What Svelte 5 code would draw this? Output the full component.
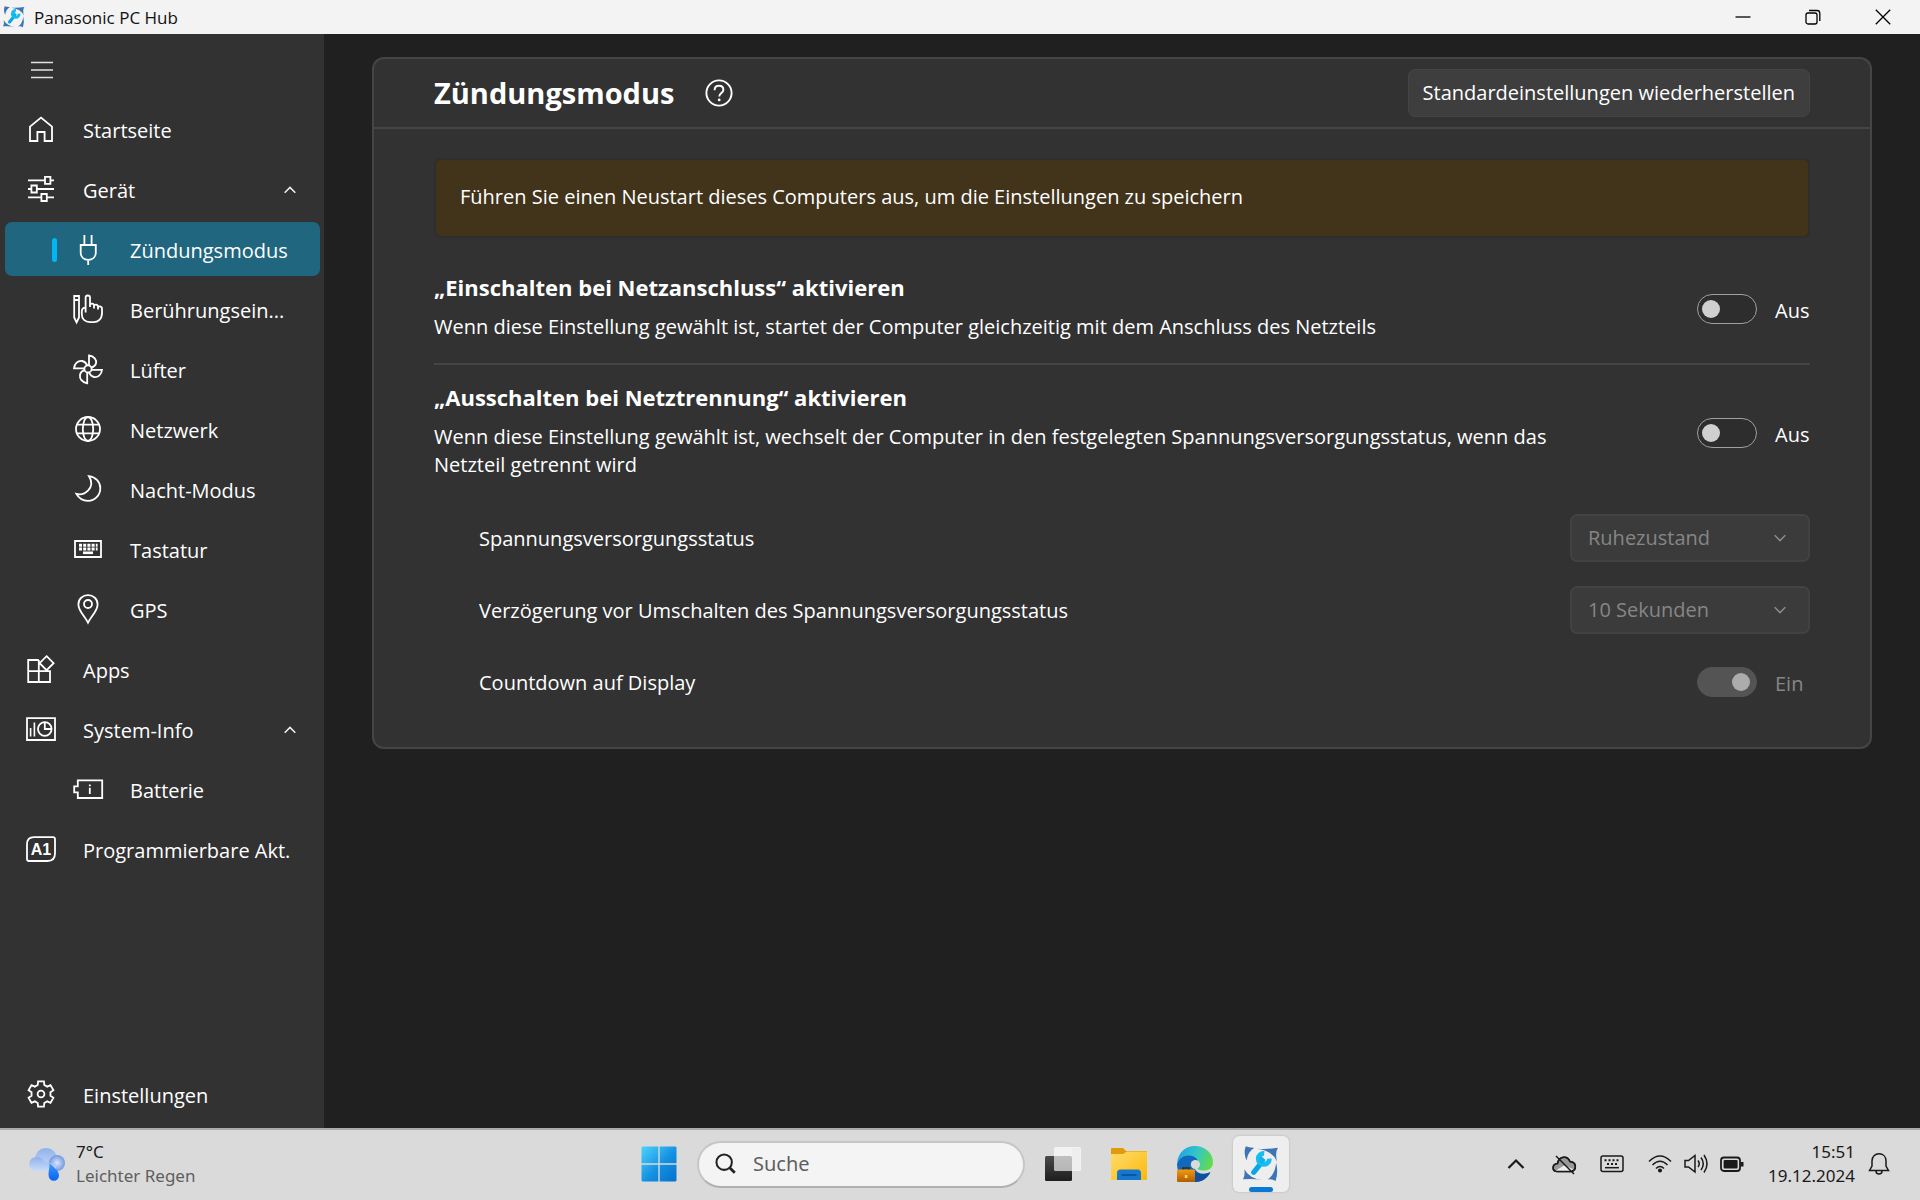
<script>
  const nav = [
    { id: 'home', label: 'Startseite' },
    { id: 'device', label: 'Gerät', open: true },
    { id: 'plug', label: 'Zündungsmodus', sub: true, active: true },
    { id: 'touch', label: 'Berührungsein...', sub: true },
    { id: 'fan', label: 'Lüfter', sub: true },
    { id: 'globe', label: 'Netzwerk', sub: true },
    { id: 'moon', label: 'Nacht-Modus', sub: true },
    { id: 'keyboard', label: 'Tastatur', sub: true },
    { id: 'pin', label: 'GPS', sub: true },
    { id: 'apps', label: 'Apps' },
    { id: 'system', label: 'System-Info', open: true },
    { id: 'battery', label: 'Batterie', sub: true },
    { id: 'a1', label: 'Programmierbare Akt.' }
  ];

  // Outline of a six-toothed cog around (15, 14)
  const cog = [-90, -30, 30, 90, 150, 210]
    .flatMap((a) => [[a - 20, 9.6], [a - 13, 13], [a + 13, 13], [a + 20, 9.6]])
    .map(([a, r]) => {
      const t = (a * Math.PI) / 180;
      return `${(15 + r * Math.cos(t)).toFixed(2)} ${(14 + r * Math.sin(t)).toFixed(2)}`;
    })
    .join(' L');

  let powerOn = $state(false);
  let powerOff = $state(false);
  let countdown = $state(true);
</script>

{#snippet icon(id)}
  <svg class="icon" viewBox="0 0 30 30" aria-hidden="true">
    {#if id === 'home'}
      <path d="M4 11.6 15 2.6 26 11.6V26H18.6V17H11.4V26H4Z" />
    {:else if id === 'device'}
      <path d="M2 5.3H19M24.5 5.3H28M2 14H5M11 14H28M2 22.4H15M21 22.4H28" />
      <path d="M19 1.8h5.4v7H19ZM5.4 10.5h5.4v7H5.4ZM15.4 19h5.4v7h-5.4Z" />
    {:else if id === 'plug'}
      <path d="M11.4 0V9.5M18.6 0V9.5M7.7 10H22.8V17.5C22.8 22 19.5 24.8 15.2 24.8S7.7 22 7.7 17.5ZM15.2 25V30" />
    {:else if id === 'touch'}
      <path d="M1.2 1H6V22.5L3.6 27.5 1.2 22.5ZM1.2 5H6" />
      <path d="M12.6 17.5V2.6C12.6-.2 17-.2 17 2.6V12M17 10.5C17 8 21 8 21 10.8V13.5M21 11.5C21 9 25 9 25 12V14.5M25 13C25 10.5 29 11 29 14V18C29 24 25 27.2 20.5 27.2H17C12 27.2 8.8 24 8.8 19V16.5C8.8 14 10 12.6 12.6 12.6" />
    {:else if id === 'fan'}
      <circle cx="15" cy="13.9" r="3.6" />
      <path d="M16 10.3V.5C21 1 24 5 23 8.5 22.5 10.5 21 11.8 18.3 12.8M18.6 14.8H29C28.6 20 24.5 22.8 21 22 18.7 21.5 17.2 20 16 17.3M14.2 17.5V28.3C9 27.5 6.4 23.5 7 20 7.4 17.6 9 16 11.8 15.2M11.4 13.4H1C1.4 8.5 5 5.5 9 6 11.5 6.4 13.2 8 14.2 10.4" />
    {:else if id === 'globe'}
      <circle cx="15" cy="14" r="12" />
      <ellipse cx="15" cy="14" rx="5.2" ry="12" />
      <path d="M4 9.6H26M4 18.4H26" />
    {:else if id === 'moon'}
      <path d="M16 1.2C22.8 2 27.3 7 27.3 13.2 27.3 20.3 21.8 25.8 15 25.8 9.8 25.8 5.8 23.4 3.4 18.9 7 19.8 12 18.8 15.2 15.4 18.8 11.5 19 6 16 1.2Z" />
    {:else if id === 'keyboard'}
      <path d="M2 6H28V22H2Z" />
      <path stroke-width="3" stroke-dasharray="3 1.2" d="M6 10.2H24.6M6 14H24.6" />
      <path stroke-width="2.6" d="M10 17.8H20" />
    {:else if id === 'pin'}
      <path d="M15 27.6C12 21.5 5.4 16 5.4 9.4 5.4 4 9.6.2 15 .2S24.6 4 24.6 9.4C24.6 16 18 21.5 15 27.6Z" />
      <circle cx="15" cy="9" r="4" />
    {:else if id === 'apps'}
      <path d="M12.8 5H2.2V27H24V16.2H2.2M12.8 5V27M20.6 1.2 27.6 8.2 20.6 15.2 13.6 8.2Z" />
    {:else if id === 'system'}
      <path d="M1 3.2H29V25H1Z" />
      <path d="M4.6 13V21.4M8.4 7.5V21.4" stroke-width="1.6" />
      <circle cx="18.8" cy="14" r="6.8" />
      <path d="M18.8 7V14H25.6" />
    {:else if id === 'battery'}
      <path d="M4.8 5.4H29.2V23H4.8V17.4H1.2V11.4H4.8Z" />
      <path d="M16.8 9.4V11.2M16.8 12.8V19" />
    {:else if id === 'a1'}
      <path d="M8 2.2H27Q29 2.2 29 4.2V18.5Q29 26 21.5 26H3Q1 26 1 24V9.5Q1 2.2 8 2.2Z" />
      <text x="15" y="20" text-anchor="middle">A1</text>
    {:else if id === 'cog'}
      <path d="M{cog}Z" />
      <circle cx="15" cy="14" r="3.4" />
    {/if}
  </svg>
{/snippet}

{#snippet wrench()}
  <svg viewBox="0 0 35 35" aria-hidden="true">
    <g fill="#3f74b5">
      <path d="M2.7.3Q6 1.8 11 1.6 4.6 5.5 3.4 14 .2 6.5 2.7.3Z" />
      <path d="M34 1.6Q31 6 33 15 28.5 4.5 13.5 2.6 24 3.4 34 1.6Z" />
      <path d="M31.7 34Q28 31.8 24 32.6 31 28 32.2 16.6 34.6 25.5 31.7 34Z" />
      <path d="M0 32.4Q2.2 28 1.3 22.5 6 31.6 19.5 33.2 10 31.4 0 32.4Z" />
    </g>
    <path d="M10.4 25.6 18.4 15.6" fill="none" stroke="#08a5e8" stroke-width="5" stroke-linecap="round" />
    <path d="M20.6 7.2A5.4 5.4 0 1 0 25.6 12.2" fill="none" stroke="#18bdf0" stroke-width="4.6" />
    <path d="M17.4 9.5 22 13.5 19 17.5 15.5 15Z" fill="#12b2ec" />
  </svg>
{/snippet}

<div class="desktop">
  <header class="titlebar">
    <span class="applogo">{@render wrench()}</span>
    <span class="apptitle">Panasonic PC Hub</span>
    <button aria-label="Minimieren"><svg viewBox="0 0 16 16"><path d="M.5 8H15.5" /></svg></button>
    <button aria-label="Verkleinern">
      <svg viewBox="0 0 16 16"><rect x="1" y="4" width="11" height="11" rx="2" /><path d="M4 1.5H12Q14.8 1.5 14.8 4.3V12" /></svg>
    </button>
    <button aria-label="Schließen"><svg viewBox="0 0 16 16"><path d="M.8.8 15.2 15.2M15.2.8.8 15.2" /></svg></button>
  </header>

  <div class="window">
    <nav>
      <button class="burger" aria-label="Menü">
        <svg viewBox="0 0 22 18"><path d="M0 1.5H22M0 9H22M0 16.5H22" /></svg>
      </button>
      {#each nav as item}
        <a href="#{item.id}" class="item" class:sub={item.sub} class:active={item.active}>
          {@render icon(item.id)}
          <span class="name">{item.label}</span>
          {#if item.open}
            <svg class="chev" viewBox="0 0 12 8"><path d="M.7 6.8 6 1.4 11.3 6.8" /></svg>
          {/if}
        </a>
      {/each}
      <a href="#settings" class="item settings">
        {@render icon('cog')}
        <span class="name">Einstellungen</span>
      </a>
    </nav>

    <main>
      <section class="card">
        <div class="head">
          <h1>Zündungsmodus</h1>
          <button class="help" aria-label="Hilfe">
            <svg viewBox="0 0 28 28">
              <circle cx="14" cy="14" r="12.6" />
              <path d="M9.6 11.2C9.6 8.4 11.4 6.8 14 6.8S18.4 8.4 18.4 10.8C18.4 14 14.2 14.2 14.2 17.6" />
              <circle class="dot" cx="14.2" cy="20.9" r="1.4" />
            </svg>
          </button>
          <button class="restore">Standardeinstellungen wiederherstellen</button>
        </div>

        <div class="body">
          <p class="notice">Führen Sie einen Neustart dieses Computers aus, um die Einstellungen zu speichern</p>

          <div class="setting">
            <div class="text">
              <h2>„Einschalten bei Netzanschluss“ aktivieren</h2>
              <p>Wenn diese Einstellung gewählt ist, startet der Computer gleichzeitig mit dem Anschluss des Netzteils</p>
            </div>
            <label class="switch">
              <input type="checkbox" role="switch" aria-label="Einschalten bei Netzanschluss" bind:checked={powerOn} />
              <span>{powerOn ? 'Ein' : 'Aus'}</span>
            </label>
          </div>

          <div class="setting second">
            <div class="text">
              <h2>„Ausschalten bei Netztrennung“ aktivieren</h2>
              <p>Wenn diese Einstellung gewählt ist, wechselt der Computer in den festgelegten Spannungsversorgungsstatus, wenn das Netzteil getrennt wird</p>
            </div>
            <label class="switch">
              <input type="checkbox" role="switch" aria-label="Ausschalten bei Netztrennung" bind:checked={powerOff} />
              <span>{powerOff ? 'Ein' : 'Aus'}</span>
            </label>
          </div>

          <div class="options">
            <div class="option">
              <label for="state">Spannungsversorgungsstatus</label>
              <div class="combo">
                <select id="state" disabled><option>Ruhezustand</option></select>
                <svg class="chev" viewBox="0 0 12 8"><path d="M.7 1.2 6 6.6 11.3 1.2" /></svg>
              </div>
            </div>
            <div class="option">
              <label for="delay">Verzögerung vor Umschalten des Spannungsversorgungsstatus</label>
              <div class="combo">
                <select id="delay" disabled><option>10 Sekunden</option></select>
                <svg class="chev" viewBox="0 0 12 8"><path d="M.7 1.2 6 6.6 11.3 1.2" /></svg>
              </div>
            </div>
            <div class="option">
              <label for="count">Countdown auf Display</label>
              <div class="switch off">
                <input id="count" type="checkbox" role="switch" disabled bind:checked={countdown} />
                <span>Ein</span>
              </div>
            </div>
          </div>
        </div>
      </section>
    </main>
  </div>

  <footer class="taskbar">
    <button class="weather">
      <svg viewBox="0 0 36 34" aria-hidden="true">
        <defs>
          <linearGradient id="cl" x1="0" y1="0" x2="0" y2="1"><stop offset="0" stop-color="#8fb2ec" /><stop offset="1" stop-color="#c9dcf8" /></linearGradient>
          <radialGradient id="cr"><stop offset="0" stop-color="#d8e6fb" /><stop offset="1" stop-color="#7599df" /></radialGradient>
          <linearGradient id="dr" x1="0" y1="0" x2="0" y2="1"><stop offset="0" stop-color="#3f9bff" /><stop offset="1" stop-color="#0863f0" /></linearGradient>
        </defs>
        <circle cx="17" cy="12" r="11" fill="url(#cl)" />
        <circle cx="28" cy="16" r="8" fill="url(#cr)" />
        <path d="M7 10C11 9 14 12 15 15L27 17V24H7C-2 23-2 11 7 10Z" fill="url(#cl)" />
        <path d="M20.5 16C24 20 30 23 30 28.5A5.2 5.2 0 0 1 19.6 28.5C19.4 24 20.5 22 20.5 16Z" fill="url(#dr)" />
      </svg>
      <span class="lines"><span>7°C</span><span class="grey">Leichter Regen</span></span>
    </button>

    <div class="pinned">
      <button class="tile" aria-label="Start">
        <svg viewBox="0 0 36 36">
          <defs><linearGradient id="win" gradientUnits="userSpaceOnUse" x1="0" y1="0" x2="36" y2="36"><stop offset="0" stop-color="#50d4ff" /><stop offset=".55" stop-color="#1390e0" /><stop offset="1" stop-color="#0670cc" /></linearGradient></defs>
          <path fill="url(#win)" d="M1.5.5H17.3V17.3H.5V1.5ZM18.7.5H34.5L35.5 1.5V17.3H18.7ZM.5 18.7H17.3V35.5H1.5L.5 34.5ZM18.7 18.7H35.5V34.5L34.5 35.5H18.7Z" />
        </svg>
      </button>
      <label class="search">
        <svg viewBox="0 0 24 24" aria-hidden="true"><circle cx="10" cy="10" r="8.4" /><path d="M16 16 21.6 21.6" stroke-width="3" /></svg>
        <input type="search" placeholder="Suche" aria-label="Suche" />
      </label>
      <button class="tile" aria-label="Aktive Anwendungen">
        <svg viewBox="0 0 36 36">
          <defs><linearGradient id="tv" x1="0" y1="0" x2="0" y2="1"><stop offset="0" stop-color="#4a4a4a" /><stop offset="1" stop-color="#1d1d1d" /></linearGradient></defs>
          <rect x="0" y="10" width="27" height="25" rx="1.5" fill="url(#tv)" />
          <rect x="9" y="1" width="27" height="24" rx="1.5" fill="#fff" opacity=".65" />
          <path d="M27 1.5H35V24H27Z" fill="#eee" />
        </svg>
      </button>
      <button class="tile" aria-label="Explorer">
        <svg viewBox="0 0 36 36">
          <defs><linearGradient id="fo" x1="0" y1="0" x2="1" y2="1"><stop offset="0" stop-color="#ffdc6e" /><stop offset="1" stop-color="#fbb908" /></linearGradient></defs>
          <path d="M0 3Q0 2 1 2H12L15 5H35Q36 5 36 6V12H0Z" fill="#e09a0a" />
          <path d="M0 8H12L16 5.5H35.5Q36 5.5 36 6.5V34H0Z" fill="url(#fo)" />
          <path d="M6 34V27Q6 23.5 9.5 23.5H26.5Q30 23.5 30 27V34Z" fill="#1677cf" />
          <path d="M10.5 29H25.5" stroke="#0b4d97" stroke-width="1.6" />
        </svg>
      </button>
      <button class="tile" aria-label="Edge">
        <svg viewBox="0 0 36 36">
          <defs>
            <linearGradient id="e1" x1="0" y1=".3" x2="1" y2=".6"><stop offset="0" stop-color="#1aa3e8" /><stop offset=".5" stop-color="#34c6c6" /><stop offset="1" stop-color="#63dc48" /></linearGradient>
            <linearGradient id="br" x1="0" y1="0" x2="0" y2="1"><stop offset="0" stop-color="#f29a12" /><stop offset="1" stop-color="#b05d05" /></linearGradient>
          </defs>
          <path d="M0 18C2 11 8 8 13 9 20 10 23 14 22 18L18 23C20 28 28 29 33 26 30 33 24 36 18 36 8 36 0 29 0 18Z" fill="#1168bd" />
          <path d="M18 25C21 29 29 29 33.5 26 31 32 25 36 18 36Z" fill="#0f4f9e" />
          <path d="M0 17C1 7 8 0 18 0 28 0 36 7 36 16 36 22 32 24.5 27 24.5 22 24.5 19.5 23 20.5 21.5 23.5 17 20 9.5 12 9.5 6 9.5 2 13 0 17Z" fill="url(#e1)" />
          <circle cx="18.4" cy="18.5" r="4.6" fill="#dadada" />
          <path d="M6 24V22H12V24" fill="none" stroke="#3a2a12" stroke-width="1.6" />
          <rect x="0" y="23.5" width="18" height="12.5" rx="1" fill="url(#br)" />
          <rect x="7.8" y="29" width="2.6" height="3" fill="#ffd35a" />
        </svg>
      </button>
      <button class="tile current" aria-label="Panasonic PC Hub">{@render wrench()}</button>
    </div>

    <div class="tray">
      <button aria-label="Ausgeblendete Symbole"><svg viewBox="0 0 24 24"><path stroke-width="2.2" d="M4.5 16 12 8.5 19.5 16" /></svg></button>
      <button aria-label="OneDrive">
        <svg viewBox="0 0 24 24">
          <path d="M5 19.5C-.5 19 0 12 5.5 11.5 7 4 15.5 3 18 9.5 25 10 25 19 19 19.5Z" fill="#999" />
          <path d="M3 19 12 13.5 21 17 19 19.5H5Z" fill="#eee" stroke="none" />
          <path d="M5 19.5C-.5 19 0 12 5.5 11.5 7 4 15.5 3 18 9.5 25 10 25 19 19 19.5ZM4 4 22 22" />
        </svg>
      </button>
      <button aria-label="Bildschirmtastatur">
        <svg viewBox="0 0 24 24"><rect x="1" y="4" width="22" height="15.5" rx="2" /><path d="M5 15.7H19" /><path stroke-width="2" stroke-dasharray="2 2" d="M4.5 8.2H20M7 12H17.5" /></svg>
      </button>
      <button class="group" aria-label="Netzwerk, Lautstärke, Akku">
        <svg viewBox="0 0 24 24"><path d="M1 9.5Q12-1.5 23 9.5M4.5 13Q12 5.5 19.5 13M8 16.5Q12 12.5 16 16.5" /><circle cx="12" cy="18.5" r="1.3" fill="#1a1a1a" /></svg>
        <svg viewBox="0 0 24 24"><path d="M1 8.5H4.5L11 3.5V20L4.5 15H1ZM14 8.5Q16.5 11.8 14 15M17 5.5Q21.5 11.8 17 18M20 3Q26 11.8 20 20.5" /></svg>
        <svg viewBox="0 0 24 24"><rect x="1" y="5.5" width="19" height="13.5" rx="3" stroke-width="1.8" /><rect x="3.6" y="8" width="14" height="8.5" rx="1" fill="#1a1a1a" stroke="none" /><path d="M22 10V14.5" stroke-width="3" /></svg>
      </button>
      <button class="clock"><span class="lines"><span>15:51</span><span>19.12.2024</span></span></button>
      <button aria-label="Benachrichtigungen">
        <svg viewBox="0 0 24 24"><path d="M2.5 18.5 5 14V9C5 4.5 8 1.8 12 1.8S19 4.5 19 9V14L21.5 18.5ZM9 19Q9 22 12 22T15 19" /></svg>
      </button>
    </div>
  </footer>
</div>

<style>
  :global(body) {
    margin: 0;
    font-family: 'Open Sans', 'Noto Sans', sans-serif;
    background: #202020;
  }
  * { box-sizing: border-box; }
  button {
    font: inherit;
    color: inherit;
    background: none;
    border: 0;
    padding: 0;
  }
  svg { display: block; flex: none; overflow: visible; }
  h1, h2, p { margin: 0; }

  .desktop {
    min-height: 100vh;
    display: flex;
    flex-direction: column;
  }

  .titlebar {
    height: 34px;
    display: flex;
    align-items: center;
    padding: 0 2px 0 3px;
    background: #f3f3f3;
    color: #111;
    font-size: 17px;
  }
  .applogo svg { width: 22px; height: 22px; }
  .apptitle { flex: 1; padding: 1px 0 0 9px; }
  .titlebar button {
    width: 70px;
    height: 34px;
    display: grid;
    place-items: center;
  }
  .titlebar button svg {
    width: 16px;
    height: 16px;
    fill: none;
    stroke: #000;
    stroke-width: 1.3;
  }

  .window { flex: 1; display: flex; }

  nav {
    width: 324px;
    flex: none;
    display: flex;
    flex-direction: column;
    gap: 6px;
    padding: 8px 4px 7px 5px;
    background: #323232;
    color: #fff;
    font-size: 20px;
  }
  .burger { height: 54px; padding: 2px 26px 0; }
  .burger svg { width: 22px; height: 18px; stroke: #e2e2e2; stroke-width: 1.5; }
  .item {
    height: 54px;
    display: flex;
    align-items: center;
    gap: 27px;
    padding: 2px 24px 0 21px;
    border-radius: 7px;
    color: #fff;
    text-decoration: none;
    white-space: nowrap;
  }
  .item.sub { padding-left: 68px; }
  .item.active {
    background: #20667e;
    padding-left: 47px;
  }
  .item.active::before {
    content: '';
    width: 5px;
    height: 24px;
    margin-right: -11px;
    border-radius: 3px;
    background: #00b7f4;
  }
  .item.settings { margin-top: auto; }
  .name { flex: 1; }
  .icon {
    width: 30px;
    height: 30px;
    fill: none;
    stroke: #fff;
    stroke-width: 1.8;
  }
  .icon text {
    fill: #fff;
    stroke: none;
    font: bold 16px 'Liberation Sans', sans-serif;
  }
  .chev {
    width: 12px;
    height: 8px;
    fill: none;
    stroke: #f0f0f0;
    stroke-width: 1.5;
  }

  main {
    flex: 1;
    min-width: 0;
    padding: 23px 48px;
    background: #202020;
    color: #fff;
    font-size: 20px;
    line-height: 28px;
  }
  .card {
    background: #323232;
    border: 2px solid #454545;
    border-radius: 12px;
  }
  .head {
    display: flex;
    align-items: center;
    padding: 10px 60px;
    border-bottom: 2px solid #454545;
  }
  h1 { font-size: 29px; line-height: 40px; }
  .help { margin-left: 31px; }
  .help svg { width: 28px; height: 28px; fill: none; stroke: #fff; stroke-width: 1.9; }
  .help .dot { fill: #fff; stroke: none; }
  .restore {
    height: 48px;
    margin-left: auto;
    padding: 0 14px;
    border: 1px solid #444;
    border-radius: 7px;
    background: #3e3e3e;
  }

  .body { padding: 29px 60px 41px; }
  .notice {
    padding: 23px 24px 25px;
    border: 2px solid #2f2e2c;
    border-radius: 7px;
    background: #42331b;
  }
  .setting {
    display: flex;
    justify-content: space-between;
    align-items: center;
    padding: 32px 0 22px;
    border-bottom: 2px solid #454545;
  }
  .setting.second { padding: 15px 0 35px; border-bottom: 0; }
  .text { max-width: 1136px; }
  h2 { font-size: 22px; line-height: 34px; margin-bottom: 9px; }
  .switch {
    display: flex;
    align-items: center;
    gap: 18px;
  }
  .setting .switch { padding-top: 7px; }
  .switch span { width: 35px; padding-top: 3px; }
  .switch input {
    appearance: none;
    width: 60px;
    height: 30px;
    margin: 0;
    padding: 5px 4px;
    display: flex;
    border: 1px solid #a0a0a0;
    border-radius: 15px;
    background: #2d2d2d;
  }
  .switch input::before {
    content: '';
    width: 18px;
    height: 18px;
    border-radius: 9px;
    background: #cfcfcf;
  }
  .switch input:checked { justify-content: flex-end; padding-right: 6px; }
  .switch.off { color: #868686; }
  .switch.off input { background: #545454; border-color: #545454; }
  .switch.off input::before { background: #acacac; }

  .options {
    display: grid;
    gap: 24px;
    padding-left: 45px;
  }
  .option {
    height: 48px;
    display: flex;
    justify-content: space-between;
    align-items: center;
  }
  .option > label { padding-top: 2px; }
  .combo { position: relative; width: 240px; }
  .combo select {
    appearance: none;
    width: 100%;
    height: 48px;
    padding: 0 16px;
    border: 2px solid #424242;
    border-radius: 7px;
    background: #3b3b3b;
    color: #868686;
    font: inherit;
    opacity: 1;
  }
  .combo .chev {
    position: absolute;
    right: 24px;
    top: 20px;
    stroke: #8a8a8a;
  }

  .taskbar {
    height: 72px;
    display: grid;
    grid-template-columns: 1fr auto 1fr;
    align-items: center;
    padding: 0 29px 2px;
    border-top: 2px solid #ababab;
    background: #dadada;
    color: #1a1a1a;
    font-family: 'Noto Sans', 'Open Sans', sans-serif;
    font-size: 17px;
    line-height: 24px;
  }
  .weather {
    display: flex;
    align-items: center;
    gap: 11px;
    text-align: left;
  }
  .weather svg { width: 36px; height: 34px; }
  .lines { display: flex; flex-direction: column; }
  .grey { color: #5f5f5f; }
  .pinned { display: flex; align-items: center; gap: 10px; }
  .tile {
    position: relative;
    width: 56px;
    height: 56px;
    display: grid;
    place-items: center;
    border-radius: 6px;
  }
  .tile svg { width: 36px; height: 36px; }
  .tile.current { background: #eee; box-shadow: 0 0 2px #aaa; }
  .tile.current::after {
    content: '';
    position: absolute;
    bottom: 0;
    left: 16px;
    width: 24px;
    height: 5px;
    border-radius: 3px;
    background: #0a78d4;
  }
  .search {
    width: 328px;
    height: 47px;
    display: flex;
    align-items: center;
    gap: 16px;
    padding: 0 20px 0 16px;
    border: 2px solid #c6c6c6;
    border-bottom-color: #b0b0b0;
    border-radius: 24px;
    background: #f4f4f4;
  }
  .search svg { width: 22px; height: 22px; fill: none; stroke: #222; stroke-width: 2.2; }
  .search input {
    flex: 1;
    min-width: 0;
    padding: 0;
    border: 0;
    outline: 0;
    background: none;
    font: inherit;
    font-size: 20px;
  }
  .search input::placeholder { color: #5f5f5f; opacity: 1; }
  .tray {
    display: flex;
    align-items: center;
    justify-content: flex-end;
    gap: 24px;
  }
  .tray svg { width: 24px; height: 24px; fill: none; stroke: #1a1a1a; stroke-width: 1.5; }
  .tray .group { display: flex; gap: 12px; }
  .clock { text-align: right; }
  .clock + button { margin-left: -12px; }
</style>
